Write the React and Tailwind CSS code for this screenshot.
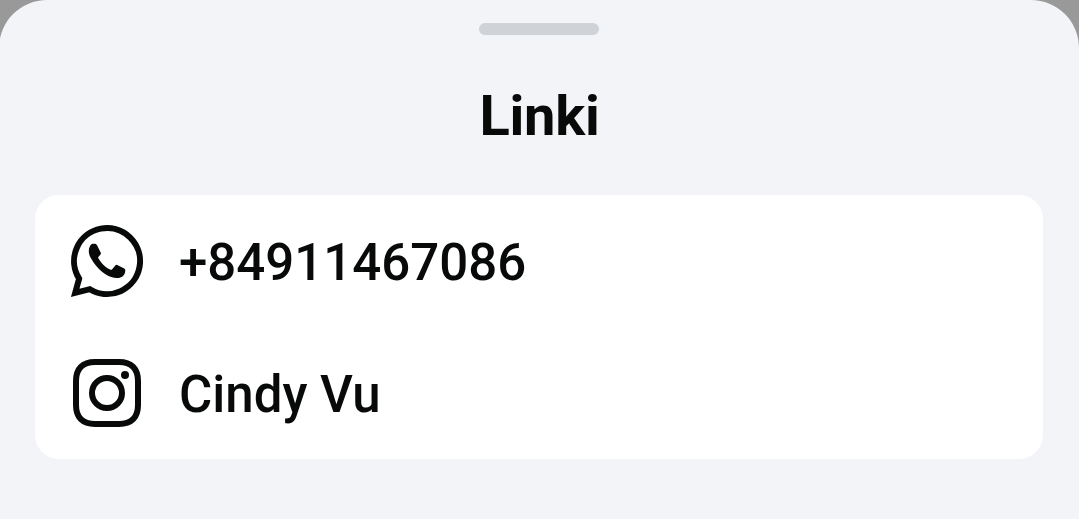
function WhatsAppIcon() {
  return (
    <svg viewBox="0 0 74 74" className="size-[74px]" fill="none" aria-hidden="true">
      <path d="M9.150 54.650A33 33 0 1 1 19.850 65.200L5.200 68.800Z" stroke="#080909" strokeWidth="6" />
      <path d="M20 22C20.800 20.300 22 19.700 24 19.700C26 19.700 26.500 20.200 27.300 21.700L30.700 28.500Q31.200 29.600 30.500 30.600L28 33.500C29.200 36 31.500 39 34.300 41.700C36.300 43.500 38.600 45 40.700 45.700Q41.500 45.900 42.200 45.200L45.300 41.400Q46 40.600 47.200 41L54.300 44.400Q55.400 45 55.300 46.500C55.200 49 54.400 50.600 53 52C51.300 53.500 49 54.100 46.700 54C43 53.700 39.700 52.700 36.700 51C33.500 49.200 31 47 28.300 44.300C25.300 41.200 22.300 37 20.400 33.300C18.400 29.300 18.200 25.500 20 22Z" fill="#080909" />
    </svg>
  );
}

function InstagramIcon() {
  return (
    <svg viewBox="0 0 74 74" className="size-[74px]" fill="none" aria-hidden="true">
      <path d="M25 6H49C61.500 6 68 12.500 68 25V49C68 61.500 61.500 68 49 68H25C12.500 68 6 61.500 6 49V25C6 12.500 12.500 6 25 6Z" stroke="#080909" strokeWidth="6" />
      <circle cx="37" cy="37" r="15" stroke="#080909" strokeWidth="6" />
      <circle cx="55" cy="19" r="4" fill="#080909" />
    </svg>
  );
}

function LinkRow({ icon, label }) {
  return (
    <div className="flex h-[132px] items-center gap-[35px] pl-[35px]">
      {icon}
      <span className="pt-[2px] text-[51px] leading-none">{label}</span>
    </div>
  );
}

export default function App() {
  return (
    <div className="h-[519px] w-[1079px] overflow-hidden bg-[#999999] font-['Roboto',sans-serif] font-medium text-[#080909]">
      <main className="-ml-px flex h-full w-[1080px] flex-col items-center rounded-t-[48px] bg-[#f2f4f8] pt-[23px]">
        <div className="h-3 w-[120px] rounded-full bg-[#cfd2d6]" />
        <h1 className="mt-[51px] pl-px text-[56px] leading-[60px] font-bold tracking-[-0.2px]">Linki</h1>
        <section className="mt-[49px] h-[264px] w-[1008px] rounded-[24px] bg-white">
          <LinkRow icon={<WhatsAppIcon />} label="+84911467086" />
          <LinkRow icon={<InstagramIcon />} label="Cindy Vu" />
        </section>
      </main>
    </div>
  );
}
